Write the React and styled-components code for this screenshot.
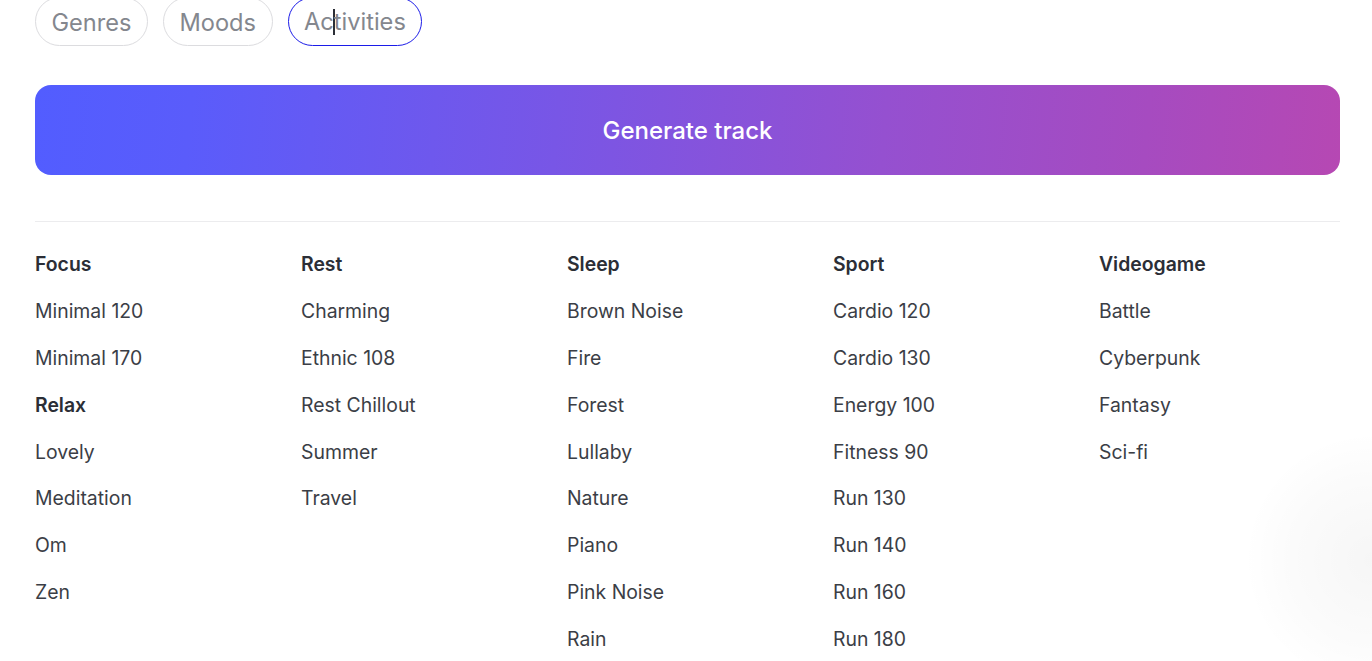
import React from "react";
import styled, { createGlobalStyle } from "styled-components";

const GlobalStyle = createGlobalStyle`
  html, body {
    margin: 0;
    padding: 0;
    background: #ffffff;
    font-family: Inter, "Noto Sans", "Liberation Sans", sans-serif;
    overflow: hidden;
  }
`;

const Page = styled.div`
  position: relative;
  width: 1372px;
  height: 661px;
  overflow: hidden;
  box-sizing: border-box;
  padding: 0 32px 0 35px;
`;

const Tabs = styled.div`
  display: flex;
  gap: 15px;
  margin-top: -3px;
`;

const Pill = styled.button`
  position: relative;
  height: 49px;
  padding: 2px 15.5px 0;
  border-radius: 25px;
  border: 1px solid ${(p) => (p.$active ? "#1c1ce8" : "#dcdcdf")};
  background: #fff;
  color: #84878e;
  font-family: inherit;
  font-size: 23.6px;
  font-weight: 400;
  line-height: 1;
  cursor: pointer;
`;

const Caret = styled.span`
  display: inline-block;
  width: 2px;
  height: 26px;
  background: #2b2e36;
  vertical-align: middle;
  margin: -4px -1px 0 -1px;
`;

const GenerateButton = styled.button`
  display: block;
  width: 100%;
  height: 90px;
  margin-top: 39px;
  border: none;
  border-radius: 16px;
  background: linear-gradient(95deg, #525dff 0%, #5a5cfb 12%, #7856e6 40%, #9550d0 65%, #a64bc0 85%, #b648b3 100%);
  color: #fff;
  font-family: inherit;
  font-size: 24px;
  font-weight: 500;
  cursor: pointer;
`;

const Divider = styled.hr`
  border: none;
  border-top: 1px solid #ececee;
  margin: 46px 0 0;
`;

const Grid = styled.div`
  display: grid;
  grid-template-columns: repeat(5, 266px);
  padding-top: 30px;
`;

const Column = styled.div`
  display: flex;
  flex-direction: column;
`;

const Row = styled.div`
  height: 46.9px;
  font-size: 19.4px;
  line-height: 24px;
  color: ${(p) => (p.$head ? "#2b2e36" : "#3b3e46")};
  font-weight: ${(p) => (p.$head ? 600 : 400)};
  white-space: nowrap;
`;

const Glow = styled.div`
  position: absolute;
  right: -130px;
  top: 430px;
  width: 260px;
  height: 260px;
  border-radius: 50%;
  background: radial-gradient(circle, rgba(0, 0, 0, 0.035) 0%, rgba(0, 0, 0, 0.015) 45%, rgba(0, 0, 0, 0) 70%);
  pointer-events: none;
`;

const columns = [
  [
    { t: "Focus", h: true },
    { t: "Minimal 120" },
    { t: "Minimal 170" },
    { t: "Relax", h: true },
    { t: "Lovely" },
    { t: "Meditation" },
    { t: "Om" },
    { t: "Zen" },
  ],
  [
    { t: "Rest", h: true },
    { t: "Charming" },
    { t: "Ethnic 108" },
    { t: "Rest Chillout" },
    { t: "Summer" },
    { t: "Travel" },
  ],
  [
    { t: "Sleep", h: true },
    { t: "Brown Noise" },
    { t: "Fire" },
    { t: "Forest" },
    { t: "Lullaby" },
    { t: "Nature" },
    { t: "Piano" },
    { t: "Pink Noise" },
    { t: "Rain" },
  ],
  [
    { t: "Sport", h: true },
    { t: "Cardio 120" },
    { t: "Cardio 130" },
    { t: "Energy 100" },
    { t: "Fitness 90" },
    { t: "Run 130" },
    { t: "Run 140" },
    { t: "Run 160" },
    { t: "Run 180" },
  ],
  [
    { t: "Videogame", h: true },
    { t: "Battle" },
    { t: "Cyberpunk" },
    { t: "Fantasy" },
    { t: "Sci-fi" },
  ],
];

export default function App() {
  return (
    <>
      <GlobalStyle />
      <Page>
        <Tabs>
          <Pill>Genres</Pill>
          <Pill>Moods</Pill>
          <Pill $active>
            Ac
            <Caret />
            tivities
          </Pill>
        </Tabs>
        <GenerateButton>Generate track</GenerateButton>
        <Divider />
        <Grid>
          {columns.map((col, i) => (
            <Column key={i}>
              {col.map((item) => (
                <Row key={item.t} $head={item.h}>
                  {item.t}
                </Row>
              ))}
            </Column>
          ))}
        </Grid>
        <Glow />
      </Page>
    </>
  );
}
